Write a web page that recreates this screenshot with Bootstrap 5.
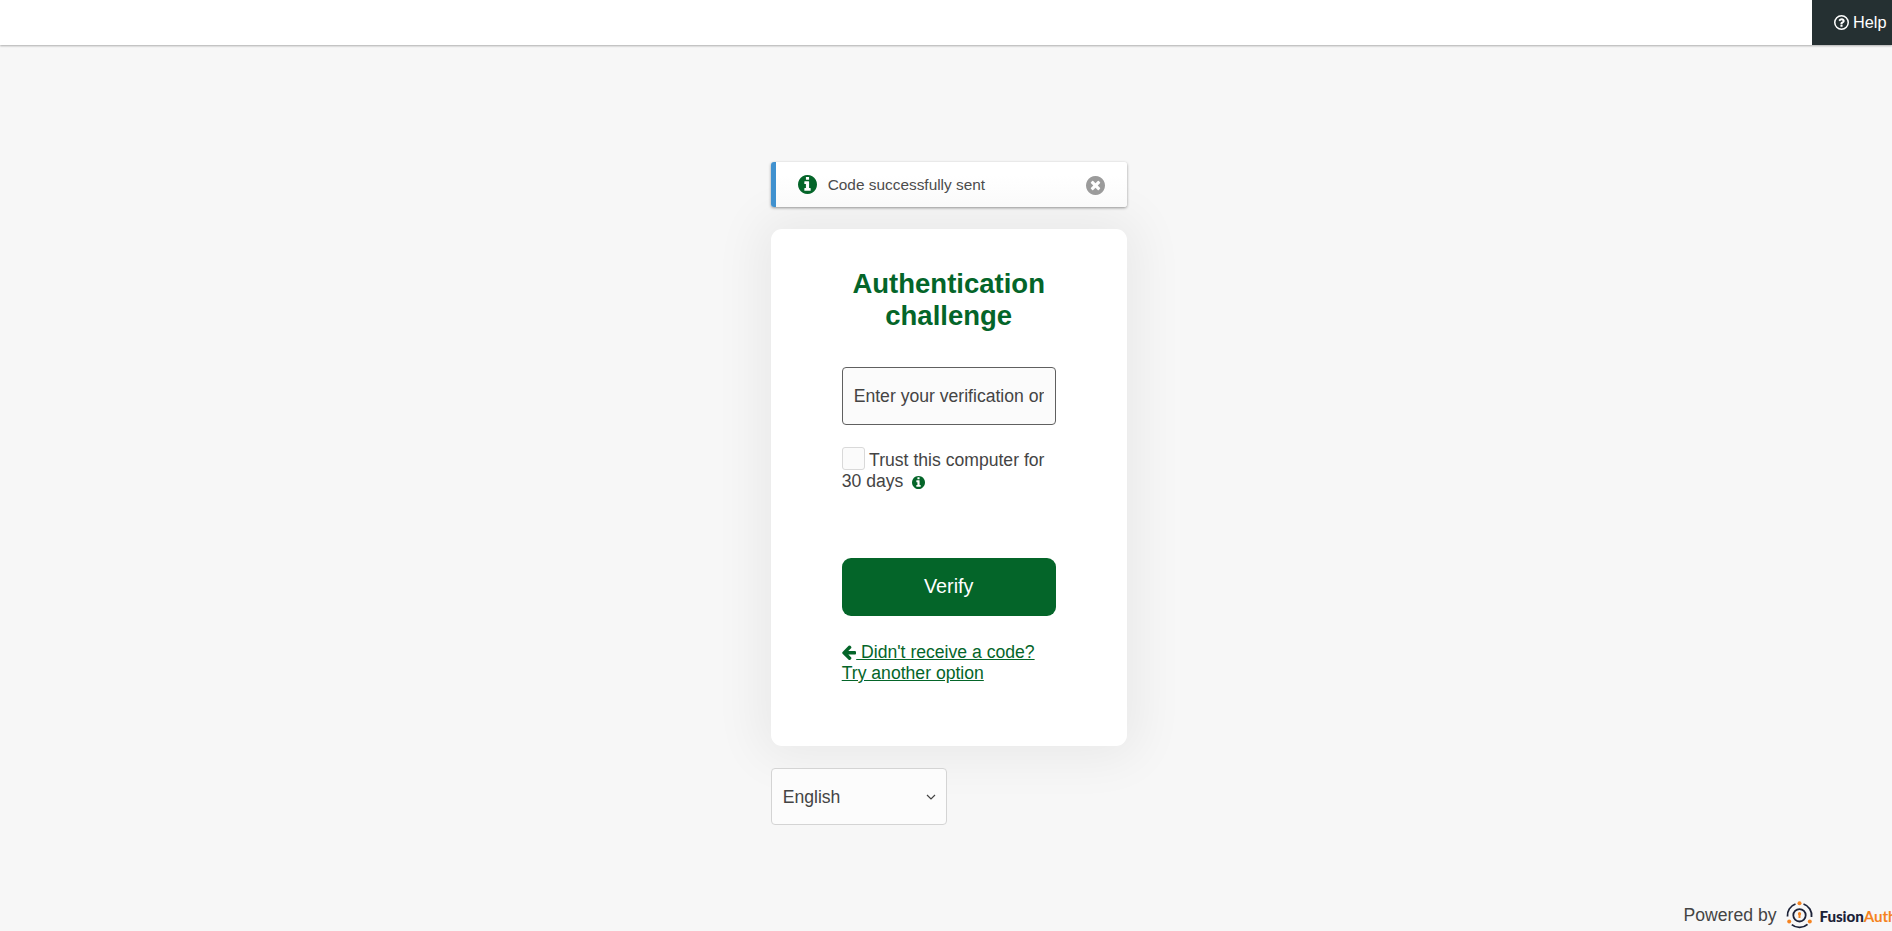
<!DOCTYPE html>
<html lang="en">
<head>
<meta charset="utf-8">
<meta name="viewport" content="width=device-width, initial-scale=1">
<title>Authentication challenge</title>
<link href="https://cdn.jsdelivr.net/npm/bootstrap@5.3.0/dist/css/bootstrap.min.css" rel="stylesheet">
<style>
:root { --brand: #046529; }
body { background: #f7f7f7; color: #444; font-family: "Liberation Sans", Arial, sans-serif; font-size: 17.6px; line-height: 21px; height: 931px; overflow: hidden; }
.topbar { height: 45px; background: #fff; box-shadow: 0 1px 2px rgba(0,0,0,.3); flex: none; }
.help-link { width: 80px; padding-left: 22px; background: #253032; color: #fff; font-size: 16.3px; gap: 4px; white-space: nowrap; }
.panel-col { width: 356px; margin-left: 770.7px; margin-top: 117px; }
.notice { position: relative; height: 45px; border-left: 5px solid #4091cf; border-radius: 3px; background: linear-gradient(#fff 30%, #fafafa); box-shadow: 0 1px 3px rgba(0,0,0,.4); padding: 0 22px; font-size: 15.4px; color: #4c4c4c; }
.notice-text { margin-left: 11px; }
.auth-card { height: 517px; margin-top: 22px; padding: 39px 71px 0; border-radius: 11px; box-shadow: 0 0 50px 12px rgba(0,0,0,.06); }
.auth-title { font-size: 27.5px; line-height: 32px; font-weight: 700; color: var(--brand); margin: 0 0 35px; }
.code-input.form-control { height: 58px; border: 1px solid #606060; border-radius: 4px; padding: 0 11px; background: #fbfbfb; font-size: 17.6px; color: #444; }
.code-input::placeholder { color: #444; opacity: 1; }
.trust { margin-top: 22px; height: 111px; white-space: nowrap; }
.trust .form-check-input { width: 23px; height: 23px; margin: 0 4.4px 0 0; border: 1px solid #d9d9d9; border-radius: 3px; background: #fbfbfb; }
.trust-line { height: 23px; margin-bottom: 1px; }
.hint-icon { margin: 2px 0 0 9px; }
.verify-btn.btn { height: 58px; border-radius: 9px; background: var(--brand); color: #fff; font-size: 19.8px; border: 0; padding: 0; }
.other-option { color: var(--brand); margin-top: 26px; white-space: nowrap; }
.other-option svg { margin-left: -.5px; vertical-align: -1.5px; }
.lang.form-select { width: 176px; height: 57px; margin-top: 22px; padding: 1px 30px 0 11px; border: 1px solid #d4d4d4; border-radius: 4px; background-color: #fcfcfc; color: #444; font-size: 17.6px; background-size: 10px 10px; background-position: right 10px center; background-image: url("data:image/svg+xml,%3Csvg xmlns='http://www.w3.org/2000/svg' viewBox='0 0 10 10'%3E%3Cpath d='M1 3l4 4 4-4' fill='none' stroke='%23444' stroke-width='1.2'/%3E%3C/svg%3E"); }
.powered { margin-left: 1683.6px; margin-bottom: 3px; height: 26px; white-space: nowrap; }
.wordmark { font: 900 15.2px/26px Lato, sans-serif; letter-spacing: -.1px; color: #1c2238; margin-left: 6px; padding-top: 1px; }
.wordmark span { color: #f58320; font-weight: 700; }
</style>
</head>
<body class="d-flex flex-column">
<svg class="d-none">
  <symbol id="i-info" viewBox="128 128 1536 1536"><path d="M1152 1376v-160q0-14-9-23t-23-9h-96v-512q0-14-9-23t-23-9h-320q-14 0-23 9t-9 23v160q0 14 9 23t23 9h96v320h-96q-14 0-23 9t-9 23v160q0 14 9 23t23 9h448q14 0 23-9t9-23zm-128-896v-160q0-14-9-23t-23-9h-192q-14 0-23 9t-9 23v160q0 14 9 23t23 9h192q14 0 23-9t9-23zm640 416q0 209-103 385.5t-279.5 279.5-385.5 103-385.5-103-279.5-279.5-103-385.5 103-385.5 279.5-279.5 385.5-103 385.5 103 279.5 279.5 103 385.5z"/></symbol>
  <symbol id="i-close" viewBox="128 128 1536 1536"><path d="M1277 1122q0-26-19-45l-181-181 181-181q19-19 19-45 0-27-19-46l-90-90q-19-19-46-19-26 0-45 19l-181 181-181-181q-19-19-45-19-27 0-46 19l-90 90q-19 19-19 46 0 26 19 45l181 181-181 181q-19 19-19 45 0 27 19 46l90 90q19 19 46 19 26 0 45-19l181-181 181 181q19 19 45 19 27 0 46-19l90-90q19-19 19-46zm387-226q0 209-103 385.5t-279.5 279.5-385.5 103-385.5-103-279.5-279.5-103-385.5 103-385.5 279.5-279.5 385.5-103 385.5 103 279.5 279.5 103 385.5z"/></symbol>
</svg>
<header class="topbar d-flex justify-content-end">
  <a href="#" class="help-link d-flex align-items-center text-decoration-none">
    <svg width="15" height="15" viewBox="128 128 1536 1536" fill="#fff"><circle cx="896" cy="896" r="690" fill="none" stroke="#fff" stroke-width="155"/><path transform="translate(134 134) scale(.85)" d="M1024 1376v-192q0-14-9-23t-23-9h-192q-14 0-23 9t-9 23v192q0 14 9 23t23 9h192q14 0 23-9t9-23zm256-672q0-88-55.5-163t-138.5-116-170-41q-243 0-371 213-15 24 8 42l132 100q7 6 19 6 16 0 25-12 53-68 86-92 34-24 86-24 48 0 85.5 26t37.5 59q0 38-20 61t-68 45q-63 28-115.5 86.5t-52.5 125.5v36q0 14 9 23t23 9h192q14 0 23-9t9-23q0-19 21.5-49.5t54.5-49.5q32-18 49-28.5t46-35 44.5-48 28-60.5 12.5-81z"/></svg>
    <span>Help</span>
  </a>
</header>
<main class="panel-col">
  <div class="notice d-flex align-items-center" role="alert">
    <svg width="19" height="19" fill="#046529"><use href="#i-info"/></svg>
    <span class="notice-text flex-grow-1">Code successfully sent</span>
    <svg width="19" height="19" fill="#9b9b9b" style="margin-top:1px"><use href="#i-close"/></svg>
  </div>
  <section class="auth-card bg-white">
    <h1 class="auth-title text-center">Authentication challenge</h1>
    <input class="form-control code-input" type="text" placeholder="Enter your verification or">
    <div class="trust">
      <label class="trust-line d-flex align-items-center" for="trust"><input class="form-check-input" type="checkbox" id="trust"><span class="pt-1">Trust this computer for</span></label>
      <div class="d-flex align-items-center"><span>30 days</span><svg class="hint-icon" width="13" height="13" fill="#046529"><use href="#i-info"/></svg></div>
    </div>
    <button class="btn verify-btn w-100" type="button">Verify</button>
    <a href="#" class="other-option d-block"><svg width="15" height="15" viewBox="64 128 1600 1600" fill="#046529"><path d="M1664 896v128q0 53-32.5 90.5t-84.5 37.5h-704l293 294q38 36 38 90t-38 90l-75 76q-37 37-90 37-52 0-91-37l-651-652q-37-37-37-90 0-52 37-91l651-650q38-38 91-38 52 0 90 38l75 74q38 38 38 91t-38 91l-293 293h704q52 0 84.5 37.5t32.5 90.5z"/></svg> Didn't receive a code?<br>Try another option</a>
  </section>
  <select class="form-select lang" aria-label="Language"><option>English</option></select>
</main>
<footer class="powered d-flex align-items-center mt-auto">
  <span>Powered by</span>
  <svg class="ms-2 flex-shrink-0" width="29" height="28" viewBox="0 0 29 28" fill="none">
    <g stroke="#1c2238" stroke-width="1.8"><circle cx="14.5" cy="14.3" r="6.2"/><path d="M18.5 3A12 12 0 0 1 26.5 16M22.5 23.3A12 12 0 0 1 6.8 23.6M2.5 15.5A12 12 0 0 1 10.5 3"/></g>
    <g fill="#f58320"><circle cx="14.5" cy="2.3" r="2"/><circle cx="24.8" cy="20.5" r="2"/><circle cx="4.2" cy="20.5" r="2"/><circle cx="14.5" cy="12.7" r="1.6"/><path d="M13.5 13h2v4h-2z"/></g>
  </svg>
  <span class="wordmark">Fusion<span>Auth</span></span>
</footer>
<script src="https://cdn.jsdelivr.net/npm/bootstrap@5.3.0/dist/js/bootstrap.bundle.min.js"></script>
</body>
</html>
